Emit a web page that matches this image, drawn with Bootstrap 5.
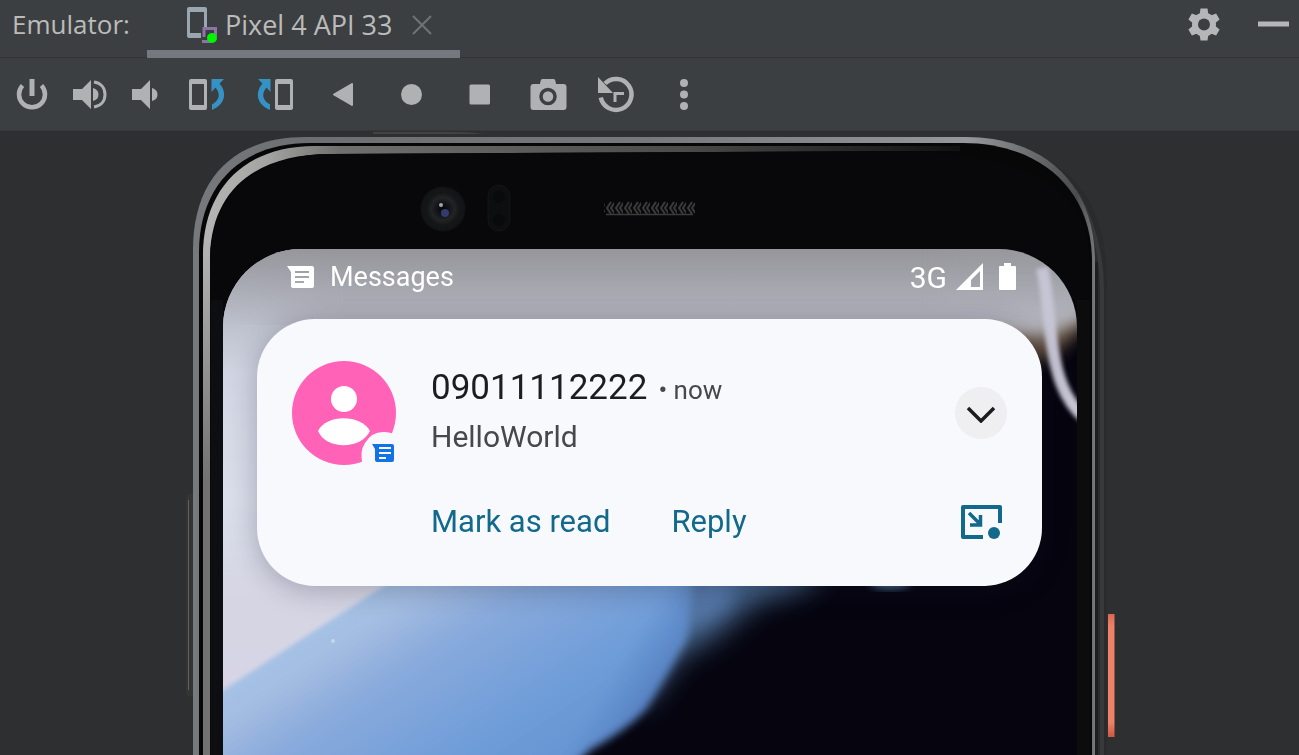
<!DOCTYPE html>
<html lang="en">
<head>
<meta charset="utf-8">
<meta name="viewport" content="width=device-width, initial-scale=1">
<title>Emulator</title>
<link href="https://cdn.jsdelivr.net/npm/bootstrap@5.3.0/dist/css/bootstrap.min.css" rel="stylesheet">
<script src="https://cdn.jsdelivr.net/npm/bootstrap@5.3.0/dist/js/bootstrap.bundle.min.js" defer></script>
<style>
  body { background: #2e2f31; font-family: "Roboto", sans-serif; }
  svg { display: block; flex: none; }
  .bare { background: none; border: 0; padding: 0; color: inherit; }
  .tool-head, .tool-strip { background: #3c3f41; color: #afb1b3; }
  .tool-head { font-family: "Open Sans", sans-serif; font-size: 26px; line-height: 48px; height: 58px; border-bottom: 1px solid #37332f; color: #bbbbbb; }
  .tool-title { width: 147px; padding-left: 12px; }
  .device-tab { height: 58px; padding-left: 40px; padding-right: 28px; border-bottom: 8px solid #74797f; gap: 8px; font-size: 27px; }
  .device-tab .bare { line-height: 48px; }
  .tab-close { margin-left: 12px; }
  .head-actions { height: 50px; gap: 36px; padding-right: 10px; }
  .tool-strip { height: 73px; padding-left: 3px; border-bottom: 1px solid #363739; }
  .tool-strip .bare { width: 68px; height: 72px; flex: none; display: flex; align-items: center; justify-content: center; }
  .tool-strip .snug { width: 56px; }
  .tool-strip .first { width: 58px; }
  .phone { max-width: 939px; }
  .phone-art { inset: 0; }
  .phone-body { padding: 118px 42px 0 43px; }
  .phone-screen { border-radius: 78px 78px 0 0; padding: 0 35px 0 34px; height: 506px; background: #05040f; }
  .status-row { height: 56px; margin-bottom: 14px; padding: 0 26px 0 30px; font-size: 27px; color: #fff; }
  .network { font-size: 30px; }
  .notice { background: #f8f9fd; border-radius: 58px; padding: 42px 35px 36px; box-shadow: 0 4px 28px rgba(20, 20, 40, .28); }
  .notice-text { padding-left: 35px; padding-bottom: 6px; color: #45494c; }
  .sender { font-size: 35px; line-height: 54px; color: #1c1d20; }
  .when { font-size: 26px; line-height: 1; margin-left: 11px; color: #45494c; }
  .message { font-size: 30px; line-height: 44px; }
  .expander { width: 52px; height: 52px; border-radius: 50%; background: #efeff1; }
  .actions-row { height: 56px; margin-top: 29px; padding: 0 5px 0 139px; font-size: 31px; color: #12698c; }
  .actions-row .reply { margin-left: 61px; }
</style>
</head>
<body class="min-vh-100 d-flex flex-column overflow-hidden">

<header class="tool-head d-flex">
  <div class="tool-title">Emulator:</div>
  <div class="device-tab d-flex align-items-center">
    <svg width="30" height="36" viewBox="0 0 30 36" aria-hidden="true">
      <path fill="#9aa7b0" fill-rule="evenodd" d="M2 0h16q2 0 2 2v18h-3V5H3v21h11v5H2q-2 0-2-2V2q0-2 2-2z"/>
      <path fill="none" stroke="#8f73a8" stroke-width="3" d="M17 30v-8.500h11.500v8M15 34.500h10"/>
      <circle cx="25" cy="31" r="5" fill="#00f500"/>
    </svg>
    <button type="button" class="bare">Pixel 4 API 33</button>
    <button type="button" class="bare tab-close" aria-label="Close tab">
      <svg width="20" height="20" viewBox="0 0 20 20"><path stroke="#6e7376" stroke-width="2" d="M1 1l18 18M19 1L1 19"/></svg>
    </button>
  </div>
  <div class="head-actions d-flex align-items-center ms-auto">
    <button type="button" class="bare" aria-label="Settings">
      <svg width="34" height="34" viewBox="0 0 34 34">
        <g fill="#b4b6b8">
          <circle cx="17" cy="16.500" r="12"/>
          <path id="tooth" d="M13.500 .5h7l1 7h-9zM12.500 25.500h9l-1 7h-7z"/>
          <use href="#tooth" transform="rotate(60 17 16.500)"/>
          <use href="#tooth" transform="rotate(120 17 16.500)"/>
        </g>
        <circle cx="17" cy="16.500" r="6" fill="#3c3f41"/>
      </svg>
    </button>
    <button type="button" class="bare" aria-label="Hide">
      <svg width="32" height="34" viewBox="0 0 32 34"><path fill="#b4b6b8" d="M1 13.500h31v5H1z"/></svg>
    </button>
  </div>
</header>

<div class="tool-strip d-flex" role="toolbar" aria-label="Device controls">
  <button type="button" class="bare first" aria-label="Power">
    <svg width="44" height="44" viewBox="0 0 44 44" fill="none" stroke="currentColor"><path stroke-width="4.500" d="M12.500 13.500A13 13 0 1 0 31.500 13.500"/><path stroke-width="5" d="M22 7v17"/></svg>
  </button>
  <button type="button" class="bare snug" aria-label="Volume up">
    <svg width="44" height="44" viewBox="0 0 44 44"><path fill="currentColor" d="M6 17h9l9-9v29l-9-9H6zM26 16q5.500 1.500 5.500 6.500T26 29z"/><path fill="none" stroke="currentColor" stroke-width="3" d="M27 10c7 1 11 6 11 12.500S34 34 27 35"/></svg>
  </button>
  <button type="button" class="bare snug" aria-label="Volume down">
    <svg width="44" height="44" viewBox="0 0 44 44"><path fill="currentColor" d="M9 17h9l9-9v29l-9-9H9zM29 16q5.500 1.500 5.500 6.500T29 29z"/></svg>
  </button>
  <button type="button" class="bare" aria-label="Rotate left">
    <svg width="44" height="44" viewBox="0 0 44 44"><g id="rotate"><path fill="#afb1b3" fill-rule="evenodd" d="M6 7h14q2 0 2 2v27q0 2-2 2H6q-2 0-2-2V9q0-2 2-2zM7 12v21h12V12z"/><path fill="#3592c4" d="M26.500 7H39l-4.500 4.500C42 20 41 32 27 38v-5.500c8-4.500 8.500-11 3.500-17L26.500 20z"/></g></svg>
  </button>
  <button type="button" class="bare" aria-label="Rotate right">
    <svg width="44" height="44" viewBox="0 0 44 44"><use href="#rotate" transform="matrix(-1 0 0 1 44 0)"/></svg>
  </button>
  <button type="button" class="bare" aria-label="Back">
    <svg width="44" height="44" viewBox="0 0 44 44"><path fill="currentColor" stroke="currentColor" stroke-linejoin="round" stroke-width="2" d="M13 22.500L31 12v21z"/></svg>
  </button>
  <button type="button" class="bare" aria-label="Home">
    <svg width="44" height="44" viewBox="0 0 44 44"><circle cx="22.500" cy="22.500" r="10.500" fill="currentColor"/></svg>
  </button>
  <button type="button" class="bare" aria-label="Overview">
    <svg width="44" height="44" viewBox="0 0 44 44"><rect x="12.500" y="12.500" width="20.500" height="20" rx="1.500" fill="currentColor"/></svg>
  </button>
  <button type="button" class="bare" aria-label="Take screenshot">
    <svg width="44" height="44" viewBox="0 0 44 44"><path fill="currentColor" d="M17.500 7h11q2 0 2.500 5h7.500q3 0 3 3v20q0 3-3 3h-30q-3 0-3-3V15q0-3 3-3H15q.500-5 2.500-5z"/><circle cx="23" cy="24.500" r="7" fill="#afb1b3" stroke="#3c3f41" stroke-width="3.500"/></svg>
  </button>
  <button type="button" class="bare" aria-label="Snapshots">
    <svg width="44" height="44" viewBox="0 0 44 44"><path fill="currentColor" d="M5 5v16h15z"/><path fill="none" stroke="currentColor" stroke-width="4.500" d="M12 11.500A15.500 15.500 0 1 1 7.800 25.500"/><path fill="none" stroke="currentColor" stroke-width="3" d="M22 30v-8.500h9"/></svg>
  </button>
  <button type="button" class="bare" aria-label="More">
    <svg width="44" height="44" viewBox="0 0 44 44" fill="currentColor"><circle cx="23" cy="11" r="4"/><circle cx="23" cy="22.500" r="4"/><circle cx="23" cy="34" r="4"/></svg>
  </button>
</div>

<main class="flex-fill overflow-hidden">
  <div class="phone position-relative w-100 mx-auto">
    <!-- Phone casing: metal rim, inner bezel, camera, speaker and side keys -->
    <svg class="phone-art position-absolute" width="100%" height="624" viewBox="180 131 939 624" preserveAspectRatio="xMidYMin slice" aria-hidden="true">
      <defs>
        <linearGradient id="rim" gradientUnits="userSpaceOnUse" x1="193" y1="0" x2="1095" y2="0">
          <stop offset="0" stop-color="#77797d"/><stop offset=".12" stop-color="#6c6e70"/><stop offset=".5" stop-color="#77787a"/><stop offset=".86" stop-color="#96979a"/><stop offset=".93" stop-color="#6b6c6e"/><stop offset=".98" stop-color="#4a4b4d"/><stop offset="1" stop-color="#77787a"/>
        </linearGradient>
        <linearGradient id="band" gradientUnits="userSpaceOnUse" x1="203" y1="0" x2="1000" y2="0">
          <stop offset="0" stop-color="#b5b5b5"/><stop offset=".08" stop-color="#a4a4a2"/><stop offset=".17" stop-color="#70706f"/><stop offset=".6" stop-color="#4c4c4b"/><stop offset="1" stop-color="#080809"/>
        </linearGradient>
        <linearGradient id="side" gradientUnits="userSpaceOnUse" x1="0" y1="240" x2="0" y2="480">
          <stop offset="0" stop-color="#757575" stop-opacity="0"/><stop offset="1" stop-color="#727270"/>
        </linearGradient>
        <linearGradient id="key" x1="0" y1="0" x2="0" y2="1">
          <stop offset="0" stop-color="#d96a51"/><stop offset=".1" stop-color="#ee8268"/><stop offset=".88" stop-color="#ee8268"/><stop offset="1" stop-color="#cc5740"/>
        </linearGradient>
        <radialGradient id="lens"><stop offset="0" stop-color="#050509"/><stop offset=".3" stop-color="#14161b"/><stop offset=".5" stop-color="#222325"/><stop offset=".7" stop-color="#151617"/><stop offset=".92" stop-color="#131415"/><stop offset="1" stop-color="#0a0a0b"/></radialGradient>
        <pattern id="mesh" width="9" height="14" patternUnits="userSpaceOnUse" x="605" y="201"><path d="M6 1L2 7l4 6M10 1L6 7l4 6" fill="none" stroke="#3a3a3a" stroke-width="2"/></pattern>
      </defs>
      <path fill="#424342" d="M373 132h80q20 0 30 2H373z"/>
      <path fill="#343533" d="M186 500q0-6 3-6h5v202h-5q-3 0-3-6z"/><path stroke="#60615f" d="M188.500 500v190" />
      <path fill="#2a2b2c" d="M1050 162C1090 185 1107 225 1107 285V770H1060V200z"/>
      <path fill="none" stroke="#38393b" stroke-width="4" d="M1075 190Q1102 235 1102 290V770"/>
      <path fill="url(#rim)" d="M193 770V250C193 180 232 137 306 137H966C1040 137 1095 180 1095 262V770z"/>
      <path fill="#070708" d="M199 770V252C199 188 238 143 310 143H963C1034 143 1092 184 1092 262V770z"/>
      <path fill="url(#band)" d="M203 770V256C203 190 243 146 315 146H960v5H900L330 154C256 154 210 190 210 260V770z"/>
      <path fill="url(#side)" d="M203 240h7v515h-7z"/>
      <path fill="#08080a" d="M210 770V262C210 196 256 154 330 154L900 151C1030 153 1090 190 1090 262V770z"/>
      <path fill="#0d0e11" d="M211 300h12v455h-12z"/>
      <path fill="#0c0c0c" d="M1077 300h13v455h-13z"/>
      <path stroke="#1d1e1f" stroke-width="3" d="M1096.500 262v510"/>
      <circle cx="443" cy="209" r="23" fill="url(#lens)"/>
      <circle cx="445" cy="213" r="4" fill="#303c6b"/><circle cx="441" cy="205" r="2" fill="#a5a5a9"/>
      <rect x="488" y="185" width="22" height="46" rx="11" fill="#0d0e0f" stroke="#151516"/>
      <circle cx="499" cy="197" r="6" fill="#0a0a0b"/><circle cx="499" cy="220" r="6" fill="#0a0a0b"/>
      <rect x="604" y="201" width="92" height="14" rx="5" fill="url(#mesh)"/><path stroke="#3b3b3b" stroke-width="1.500" d="M606 214.500h87"/>
      <path fill="url(#key)" d="M1108 614h6.500v123h-6.500z"/>
    </svg>

    <div class="phone-body position-relative">
      <div class="phone-screen position-relative overflow-hidden">
        <!-- Wallpaper -->
        <svg class="position-absolute top-0 start-0" width="100%" height="506" viewBox="223 249 854 506" preserveAspectRatio="none" aria-hidden="true">
          <defs>
            <linearGradient id="pale" gradientUnits="userSpaceOnUse" x1="0" y1="249" x2="0" y2="700"><stop offset="0" stop-color="#97979c"/><stop offset=".16" stop-color="#bcc0cc"/><stop offset=".28" stop-color="#d2d6e3"/><stop offset=".55" stop-color="#dadeea"/><stop offset=".8" stop-color="#d5d5e3"/><stop offset="1" stop-color="#d8d5e6"/></linearGradient>
            <linearGradient id="sky" gradientUnits="userSpaceOnUse" x1="300" y1="625" x2="450" y2="850"><stop offset="0" stop-color="#a3c4e6"/><stop offset=".14" stop-color="#a5bde2"/><stop offset=".35" stop-color="#89aadc"/><stop offset=".75" stop-color="#6d9cd8"/><stop offset="1" stop-color="#6593d2"/></linearGradient>
            <linearGradient id="edge" gradientUnits="userSpaceOnUse" x1="620" y1="660" x2="695" y2="705"><stop offset="0" stop-color="#4a72b5" stop-opacity="0"/><stop offset="1" stop-color="#4a72b5"/></linearGradient>
            <linearGradient id="shade" gradientUnits="userSpaceOnUse" x1="0" y1="249" x2="0" y2="325"><stop offset="0" stop-color="#96969b"/><stop offset="1" stop-color="#b5b6c1"/></linearGradient>
            <linearGradient id="fadeR" x1="0" y1="0" x2="1" y2="0"><stop offset="0" stop-color="#fff" stop-opacity="0"/><stop offset=".14" stop-color="#fff"/></linearGradient>
            <mask id="topmask"><rect x="223" y="249" width="854" height="180" fill="url(#fadeR)"/></mask>
            <filter id="soft2" x="-20%" y="-20%" width="140%" height="140%"><feGaussianBlur stdDeviation="2"/></filter>
            <filter id="soft4" x="-20%" y="-20%" width="140%" height="140%"><feGaussianBlur stdDeviation="4"/></filter>
            <filter id="soft9" x="-60%" y="-60%" width="220%" height="220%"><feGaussianBlur stdDeviation="8"/></filter>
            <filter id="soft16" x="-30%" y="-50%" width="160%" height="200%"><feGaussianBlur stdDeviation="14"/></filter>
          </defs>
          <rect x="223" y="249" width="854" height="506" fill="#05040f"/>
          <path fill="#47678f" filter="url(#soft16)" d="M600 480H860L810 585 755 602 712 638 680 655 640 710z"/>
          <path fill="url(#pale)" d="M223 249H500V600L223 755z"/>
          <g filter="url(#soft4)">
            <path fill="url(#sky)" d="M200 703L385 580 500 500H690Q700 590 686 640Q664 680 647 708Q630 728 590 750L560 780H200z"/>
            <path fill="url(#edge)" d="M540 580H688Q694 610 684 640Q664 680 647 708Q630 728 590 750L560 780H500z"/>
          </g>
          <path fill="#5b7fb4" opacity=".7" filter="url(#soft9)" d="M688 560h50l-10 45-38 22z"/>
          <path fill="url(#pale)" filter="url(#soft2)" d="M210 240H400V575L210 697z"/>
          <ellipse cx="890" cy="582" rx="20" ry="7" fill="#47678f" filter="url(#soft4)"/>
          <g mask="url(#topmask)">
            <path fill="#5d4c3e" filter="url(#soft9)" d="M990 300h100v22l-40 38h-60z"/>
            <path fill="#b0aeb0" filter="url(#soft9)" d="M970 220h130v90l-50 26h-80z"/>
            <path fill="url(#shade)" d="M223 249h767v76H223z"/>
            <path fill="url(#shade)" filter="url(#soft9)" d="M940 220h160v85l-60 20H940z"/>
          </g>
          <path fill="none" stroke="#c6c5d4" stroke-width="12" filter="url(#soft2)" d="M1042 268C1050 300 1048 350 1062 385Q1070 405 1084 417"/>
          <circle cx="333" cy="641" r="2" fill="#c5d5ef"/>
        </svg>

        <div class="status-row position-relative d-flex align-items-center">
          <svg width="27" height="22" viewBox="0 0 27 22" aria-hidden="true"><path fill="#fff" fill-rule="evenodd" d="M0 0h25q2 0 2 2v18q0 2-2 2H6q-2 0-2-2V6zM8 5v2h14V5zM8 10v2h14v-2zM8 15v2h9v-2z"/></svg>
          <span class="ms-3">Messages</span>
          <span class="network ms-auto">3G</span>
          <svg class="ms-2" width="28" height="28" viewBox="0 0 28 28" aria-hidden="true"><path fill="#fff" fill-rule="evenodd" d="M28 0v27H1zM25 8l-9 9v7h9z"/></svg>
          <svg class="ms-3" width="17" height="28" viewBox="0 0 17 28" aria-hidden="true"><path fill="#fff" d="M5 0h7v3h4q1 0 1 1v22q0 1-1 1H1q-1 0-1-1V4q0-1 1-1h4z"/></svg>
        </div>

        <section class="notice position-relative" aria-label="Notification">
          <div class="d-flex align-items-center">
            <svg width="104" height="104" viewBox="0 0 104 104" aria-hidden="true">
              <circle cx="52" cy="52" r="52" fill="#ff62b7"/>
              <circle cx="52" cy="38" r="13" fill="#fff"/>
              <path fill="#fff" d="M26 70C34 53 69 53 78 70C69 89 34 89 26 70z"/>
              <path fill="#f8f9fd" d="M71 104Q67 91 73 82Q80 70 93 71Q98 71 104 74v30z"/>
              <path fill="#1273e6" fill-rule="evenodd" d="M80 83h20q2 0 2 2v14q0 2-2 2H85q-2 0-2-2V88zM87 86v2h12v-2zM87 91v2h12v-2zM87 96v2h7v-2z"/>
            </svg>
            <div class="notice-text flex-fill">
              <div class="sender">09011112222<span class="when">• now</span></div>
              <div class="message">HelloWorld</div>
            </div>
            <button type="button" class="bare expander d-flex align-items-center justify-content-center" aria-label="Expand">
              <svg width="32" height="20" viewBox="0 0 32 20"><path fill="none" stroke="#1b1c1e" stroke-width="3.500" d="M3 5l13 13L29 5"/></svg>
            </button>
          </div>
          <div class="actions-row d-flex align-items-center">
            <button type="button" class="bare">Mark as read</button>
            <button type="button" class="bare reply">Reply</button>
            <button type="button" class="bare ms-auto" aria-label="Open as bubble">
              <svg width="42" height="36" viewBox="0 0 42 36"><path fill="none" stroke="#12698c" stroke-width="4" stroke-linejoin="round" d="M23 33H3V3h37v16"/><path fill="none" stroke="#12698c" stroke-width="3.500" d="M9 9l11 11M10 21h10.500V11"/><circle cx="34" cy="29" r="6" fill="#12698c"/></svg>
            </button>
          </div>
        </section>
      </div>
    </div>
  </div>
</main>
</body>
</html>
